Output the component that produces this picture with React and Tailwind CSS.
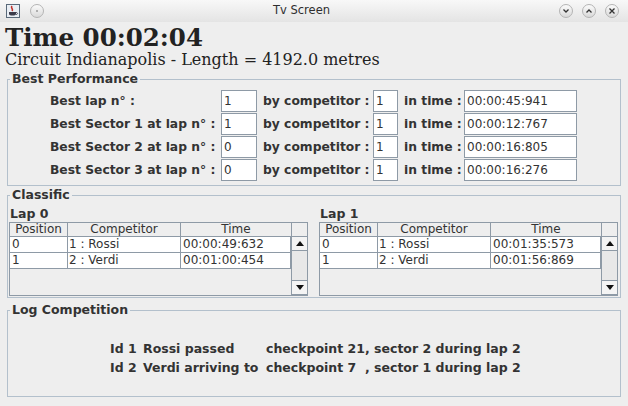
import React from "react";

const perf = [
  ["Best lap n° :", "1", "1", "00:00:45:941"],
  ["Best Sector 1 at lap n° :", "1", "1", "00:00:12:767"],
  ["Best Sector 2 at lap n° :", "0", "1", "00:00:16:805"],
  ["Best Sector 3 at lap n° :", "0", "1", "00:00:16:276"],
];

const laps = [
  {
    lap: 0,
    rows: [
      ["0", "1 : Rossi", "00:00:49:632"],
      ["1", "2 : Verdi", "00:01:00:454"],
    ],
  },
  {
    lap: 1,
    rows: [
      ["0", "1 : Rossi", "00:01:35:573"],
      ["1", "2 : Verdi", "00:01:56:869"],
    ],
  },
];

const log = [
  ["Id 1", "Rossi passed", "checkpoint 21, sector 2 during lap 2"],
  ["Id 2", "Verdi arriving to", "checkpoint 7  , sector 1 during lap 2"],
];

const Circle = ({ children }) => (
  <div className="flex h-[14px] w-[14px] items-center justify-center rounded-full border border-[#b4b4b4] bg-linear-to-b from-[#fbfbfb] to-[#d9d9d9]">
    {children}
  </div>
);

const TitleBar = () => (
  <div className="flex h-[22px] items-center bg-linear-to-b from-[#f8f8f8] to-[#e4e4e4] pl-[6px] pr-[9px]">
    <div className="flex w-[38px] items-center gap-[10px]">
      {/* app icon */}
      <svg width="14" height="14" viewBox="0 0 14 14">
        <rect x="0.5" y="0.5" width="13" height="13" fill="#e9eef4" stroke="#5a6a7a" />
        <path d="M6 2 C4 4 8 5 6 7" stroke="#c0302a" strokeWidth="1.6" fill="none" />
        <path d="M3 8 H10 V10 C10 12 3 12 3 10 Z" fill="#3b3b4a" />
        <path d="M10 8.5 C12 8.5 12 10.5 10 10.5" stroke="#3b3b4a" fill="none" />
      </svg>
      <Circle>
        <div className="h-[2px] w-[2px] rounded-full bg-[#9a9a9a]" />
      </Circle>
    </div>
    <div className="flex-1 text-center font-['DejaVu_Sans',sans-serif] text-[11.5px] text-[#2e2e2e]">
      Tv Screen
    </div>
    <div className="flex items-center gap-[9px]">
      <Circle>
        <svg width="8" height="8" viewBox="0 0 8 8">
          <path d="M1.5 2.5 L4 5 L6.5 2.5" stroke="#333" strokeWidth="1.3" fill="none" />
        </svg>
      </Circle>
      <Circle>
        <svg width="8" height="8" viewBox="0 0 8 8">
          <path d="M1.5 5.5 L4 3 L6.5 5.5" stroke="#333" strokeWidth="1.3" fill="none" />
        </svg>
      </Circle>
      <Circle>
        <svg width="8" height="8" viewBox="0 0 8 8">
          <path d="M1.5 1.5 L6.5 6.5 M6.5 1.5 L1.5 6.5" stroke="#333" strokeWidth="1.3" fill="none" />
        </svg>
      </Circle>
    </div>
  </div>
);

const Group = ({ title, className = "", children }) => (
  <fieldset className={`mx-[7px] border border-[#b3c0cc] ${className}`}>
    <legend className="ml-[2px] h-[16px] px-[2px] text-[12.5px] font-bold leading-[16px] text-[#333]">
      {title}
    </legend>
    {children}
  </fieldset>
);

const Field = ({ value, w }) => (
  <div
    className={`h-[22px] border border-[#8e9aa6] bg-white px-[2px] text-[12px] font-normal leading-[20px] text-[#333] ${w}`}
  >
    {value}
  </div>
);

const Arrow = ({ up }) => (
  <div className="flex h-[15px] items-center justify-center border-b border-t border-[#8e9aa6] bg-[#f4f4f4]">
    <svg width="8" height="5" viewBox="0 0 8 5">
      <path d={up ? "M0 5 L4 0 L8 5 Z" : "M0 0 L8 0 L4 5 Z"} fill="#111" />
    </svg>
  </div>
);

const LapTable = ({ lap, rows }) => (
  <div className="w-[299px]">
    <div className="h-[15px] pl-[1px] text-[12.5px] font-bold leading-[14px] text-[#333]">
      Lap {lap}
    </div>
    <div className="flex h-[74px] border border-[#8e9aa6] bg-[#eeeeee] text-[12px] leading-[15px] text-[#333]">
      <div className="flex flex-1 flex-col">
        <div className="flex h-[14px] border-b border-[#8e9aa6] leading-[13px]">
          <div className="w-[58px] border-r border-[#8e9aa6] text-center">Position</div>
          <div className="w-[113px] border-r border-[#8e9aa6] text-center">Competitor</div>
          <div className="flex-1 text-center">Time</div>
        </div>
        {rows.map((r) => (
          <div key={r[0]} className="flex h-[16px] border-b border-[#8e9aa6] bg-white">
            <div className="w-[58px] border-r border-[#8e9aa6] pl-[2px]">{r[0]}</div>
            <div className="w-[113px] border-r border-[#8e9aa6] pl-[1px]">{r[1]}</div>
            <div className="flex-1 border-r border-[#8e9aa6] pl-[2px]">{r[2]}</div>
          </div>
        ))}
      </div>
      <div className="flex w-[16px] flex-col border-l border-[#8e9aa6]">
        <div className="h-[13px]" />
        <Arrow up />
        <div className="flex-1 bg-[#e8e8e8]" />
        <Arrow />
      </div>
    </div>
  </div>
);

export default function App() {
  return (
    <div className="flex h-[406px] w-[628px] flex-col overflow-hidden bg-[#eeeeee] font-['DejaVu_Sans',sans-serif]">
      <TitleBar />
      <div className="mt-[3px] h-[26px] pl-[5px] font-['DejaVu_Serif',serif] text-[24.5px] font-bold leading-[26px] text-[#222]">
        Time 00:02:04
      </div>
      <div className="h-[18px] pl-[5px] font-['DejaVu_Serif',serif] text-[16px] leading-[18px] text-[#222]">
        Circuit Indianapolis - Length = 4192.0 metres
      </div>

      <Group title="Best Performance" className="mt-[2px] pb-[4px] pt-[3px]">
        <div className="flex flex-col gap-[1px] pl-[42px] text-[12.3px] font-bold text-[#333]">
          {perf.map((p) => (
            <div key={p[0]} className="flex h-[22px] items-center">
              <div className="w-[171px]">{p[0]}</div>
              <Field value={p[1]} w="w-[36px]" />
              <div className="w-[116px] pl-[6px]">by competitor :</div>
              <Field value={p[2]} w="w-[25px]" />
              <div className="w-[66px] pl-[6px]">in time :</div>
              <Field value={p[3]} w="w-[113px]" />
            </div>
          ))}
        </div>
      </Group>

      <Group title="Classific" className="mt-[1px] pb-[1px] pt-[4px]">
        <div className="flex gap-[11px] pl-[1px]">
          {laps.map((l) => (
            <LapTable key={l.lap} lap={l.lap} rows={l.rows} />
          ))}
        </div>
      </Group>

      <Group title="Log Competition" className="mt-[4px] pb-[19px] pt-[21px]">
        <div className="grid grid-cols-[33px_123px_auto] pl-[102px] text-[12.5px] font-bold leading-[19px] text-[#333]">
          {log.map((l) => (
            <React.Fragment key={l[0]}>
              <div>{l[0]}</div>
              <div>{l[1]}</div>
              <div className="whitespace-pre">{l[2]}</div>
            </React.Fragment>
          ))}
        </div>
      </Group>
    </div>
  );
}
